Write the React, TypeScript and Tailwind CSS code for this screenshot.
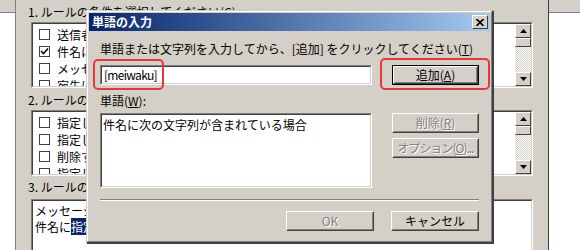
import { FunctionComponent, ReactNode } from "react";

const font = "font-['MS_UI_Gothic','Noto_Sans_CJK_JP',sans-serif]";

const Sunken: FunctionComponent<{ className?: string; children?: ReactNode }> = ({
  className = "",
  children,
}) => (
  <div className={`border border-t-[#808080] border-l-[#808080] border-b-white border-r-white ${className}`}>
    <div className="w-full h-full border border-t-[#404040] border-l-[#404040] border-b-[#d4d0c8] border-r-[#d4d0c8] bg-white overflow-hidden">
      {children}
    </div>
  </div>
);

const Button: FunctionComponent<{
  className?: string;
  disabled?: boolean;
  isDefault?: boolean;
  children?: ReactNode;
}> = ({ className = "", disabled, isDefault, children }) => {
  const face = (
    <div className="w-full h-full border border-t-white border-l-white border-b-[#404040] border-r-[#404040]">
      <div
        className={`w-full h-full border border-t-[#d4d0c8] border-l-[#d4d0c8] border-b-[#808080] border-r-[#808080] flex items-center justify-center text-[12px] leading-none whitespace-nowrap ${
          disabled ? "text-[#808080] [text-shadow:1px_1px_0_#fff]" : "text-black"
        }`}
      >
        {children}
      </div>
    </div>
  );
  return isDefault ? (
    <div className={`border border-black ${className}`}>{face}</div>
  ) : (
    <div className={className}>{face}</div>
  );
};

const Checkbox: FunctionComponent<{ checked?: boolean }> = ({ checked }) => (
  <div className="w-[11px] h-[11px] border border-[#404040] bg-white flex items-center justify-center shrink-0">
    {checked && (
      <svg width="9" height="9" viewBox="0 0 9 9">
        <path d="M1 4 L3.5 6.5 L8 1.5" stroke="#000" strokeWidth="1.6" fill="none" />
      </svg>
    )}
  </div>
);

const Arrow: FunctionComponent<{ up?: boolean }> = ({ up }) => (
  <div className="h-[14px] w-full border border-t-white border-l-white border-b-[#404040] border-r-[#404040] bg-[#d4d0c8] flex items-center justify-center">
    <svg width="7" height="4" viewBox="0 0 7 4">
      <path d={up ? "M3.5 0 L7 4 L0 4 Z" : "M0 0 L7 0 L3.5 4 Z"} fill="#000" />
    </svg>
  </div>
);

const ScrollBar = () => (
  <div className="w-[16px] h-full flex flex-col shrink-0">
    <Arrow up />
    <div className="h-[9px] border border-t-white border-l-white border-b-[#404040] border-r-[#404040] bg-[#d4d0c8]" />
    <div className="flex-1 bg-[image:repeating-conic-gradient(#ffffff_0_25%,#d4d0c8_0_50%)] bg-[length:2px_2px]" />
    <Arrow />
  </div>
);

const CheckList: FunctionComponent<{ items: { label: string; checked?: boolean }[] }> = ({
  items,
}) => (
  <div className="flex h-full">
    <div className="flex-1 pt-[2px] overflow-hidden">
      {items.map((item, i) => (
        <div key={i} className="h-[17px] flex items-center pl-[6px] gap-[7px] text-[12px] whitespace-nowrap">
          <Checkbox checked={item.checked} />
          <span>{item.label}</span>
        </div>
      ))}
    </div>
    <ScrollBar />
  </div>
);

const U: FunctionComponent<{ children: ReactNode }> = ({ children }) => (
  <span className="underline underline-offset-1">{children}</span>
);

const App = () => {
  return (
    <div className={`relative w-[580px] h-[250px] overflow-hidden bg-[#d4d0c8] text-black ${font}`}>
      {/* background rule window */}
      <div className="flex h-full">
        <div className="w-[16px] h-full flex flex-col border-r border-[#808080]">
          <div className="h-[13px] border-b border-[#808080]" />
          <div className="flex-1 bg-white" />
        </div>
        <div className="w-[532px] h-full pl-[15px] pr-[15px] flex flex-col">
          <div className="h-[22px] pt-[5px] text-[12px] leading-[14px] whitespace-nowrap -ml-[3px]">
            1. ルールの条件を選択してください(<U>C</U>)
          </div>
          <Sunken className="h-[66px]">
            <CheckList
              items={[
                { label: "送信者にユーザーが含まれる場合" },
                { label: "件名に特定の言葉が含まれる場合", checked: true },
                { label: "メッセージ本文に特定の言葉が含まれる場合" },
                { label: "宛先にユーザーが含まれる場合" },
              ]}
            />
          </Sunken>
          <div className="h-[22px] pt-[5px] text-[12px] leading-[14px] whitespace-nowrap -ml-[3px]">
            2. ルールのアクションを選択してください(<U>A</U>)
          </div>
          <Sunken className="h-[66px]">
            <CheckList
              items={[
                { label: "指定したフォルダに移動する" },
                { label: "指定したフォルダにコピーする" },
                { label: "削除する" },
                { label: "指定したユーザーに転送する" },
              ]}
            />
          </Sunken>
          <div className="h-[23px] pt-[4px] text-[12px] leading-[14px] whitespace-nowrap -ml-[3px]">
            3. ルールの説明 (下線の付いた値をクリックすると編集できます)(<U>D</U>)
          </div>
          <Sunken className="flex-1 -mb-[10px]">
            <div className="pl-[2px] pt-[2px] text-[12px] leading-[16px] whitespace-nowrap">
              <div>メッセージを受信したとき</div>
              <div>
                件名に<span className="bg-[#0a246a] text-white">指定</span>の言葉が含まれる場合
              </div>
            </div>
          </Sunken>
        </div>
        <div className="flex-1 h-full flex flex-col border-l border-[#404040]">
          <div className="h-[13px] border-b border-[#808080]" />
          <div className="flex-1 bg-white" />
        </div>
      </div>

      {/* dialog */}
      <div className="absolute left-[86px] top-[10px] w-[407px] h-[233px] border border-t-[#d4d0c8] border-l-[#d4d0c8] border-b-[#404040] border-r-[#404040] shadow-[1px_1px_0_#404040]">
        <div className="w-full h-full border border-t-white border-l-white border-b-[#808080] border-r-[#808080] bg-[#d4d0c8] flex flex-col">
          <div className="h-[18px] mx-[1px] mt-[1px] bg-gradient-to-r from-[#0a246a] to-[#a6caf0] flex items-center justify-between pl-[3px] pr-[2px]">
            <span className="text-white font-bold text-[12px] leading-none">単語の入力</span>
            <div className="w-[16px] h-[14px] border border-t-white border-l-white border-b-[#404040] border-r-[#404040] bg-[#d4d0c8] flex items-center justify-center">
              <svg width="8" height="7" viewBox="0 0 8 7">
                <path d="M0.5 0 L7.5 7 M7.5 0 L0.5 7" stroke="#000" strokeWidth="1.7" />
              </svg>
            </div>
          </div>
          <div className="flex flex-col pl-[12px] pr-[12px]">
            <div className="mt-[11px] h-[14px] text-[12px] leading-[14px] whitespace-nowrap">
              単語または文字列を入力してから、[追加] をクリックしてください(<U>T</U>)
            </div>
            <div className="mt-[9px] flex gap-[20px]">
              <Sunken className="w-[272px] h-[20px]">
                <div className="pl-[2px] text-[12px] leading-[16px] tracking-[-0.7px]">[meiwaku]</div>
              </Sunken>
              <Button isDefault className="w-[87px] h-[20px]">
                追加(<U>A</U>)
              </Button>
            </div>
            <div className="mt-[9px] flex gap-[20px]">
              <div className="w-[272px] flex flex-col">
                <div className="h-[14px] text-[12px] leading-[14px]">
                  単語(<U>W</U>):
                </div>
                <Sunken className="mt-[5px] h-[75px]">
                  <div className="pl-[1px] pt-[3px] text-[12px] leading-[14px] whitespace-nowrap">
                    件名に次の文字列が含まれている場合
                  </div>
                </Sunken>
              </div>
              <div className="w-[87px] pt-[19px] flex flex-col gap-[5px]">
                <Button disabled className="h-[20px]">
                  削除(<U>R</U>)
                </Button>
                <Button disabled className="h-[20px]">
                  <span className="tracking-[-1px]">
                    オプション(<U>O</U>)...
                  </span>
                </Button>
              </div>
            </div>
            <div className="mt-[11px] w-[379px] border-t border-b border-t-[#808080] border-b-white" />
            <div className="mt-[10px] flex justify-end gap-[17px]">
              <Button disabled className="w-[88px] h-[20px]">
                OK
              </Button>
              <Button className="w-[88px] h-[20px]">キャンセル</Button>
            </div>
          </div>
        </div>
      </div>

      {/* red highlights */}
      <div className="absolute left-[93px] top-[59px] w-[71px] h-[31px] border-2 border-[#e8363c] rounded-[5px]" />
      <div className="absolute left-[380px] top-[58px] w-[110px] h-[32px] border-2 border-[#e8363c] rounded-[5px]" />
    </div>
  );
};

export default App;
